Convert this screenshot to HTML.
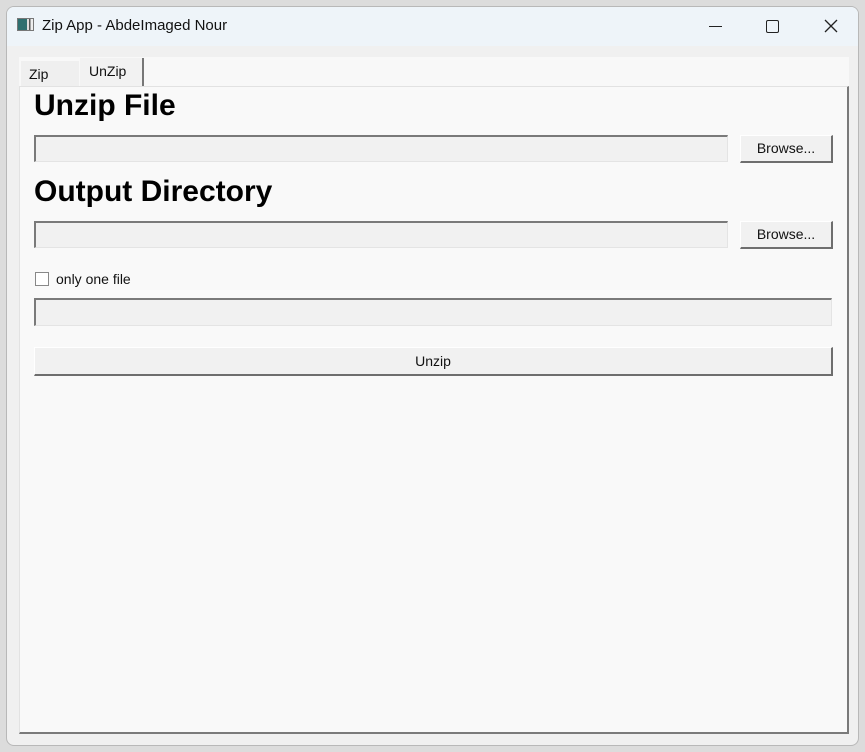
<!DOCTYPE html>
<html><head><style>
*{margin:0;padding:0;box-sizing:border-box}
body{width:865px;height:752px;background:#dcdcdc;position:relative;overflow:hidden;font-family:"Liberation Sans",sans-serif}
.a{position:absolute}
.win{left:6px;top:6px;width:853px;height:740px;background:#f0f0f0;border:1px solid #b8b8b8;border-radius:8px;overflow:hidden}
.title{left:0;top:0;width:853px;height:39px;background:#eef4f9}
.sunk{background:#f1f1f1;border-top:2px solid #7a7a7a;border-left:2px solid #7a7a7a;border-bottom:1px solid #e4e4e4;border-right:1px solid #e4e4e4}
.btn{background:#f1f1f1;border-bottom:2px solid #6e6e6e;border-right:2px solid #6e6e6e;border-top:1px solid #fff;border-left:1px solid #fff;font-size:14px;color:#111;text-align:center}
h1{position:absolute;font-size:30px;font-weight:bold;color:#000}
</style></head><body>
<div class="a win">
 <div class="a title"></div>
 <div class="a" style="left:10px;top:11px;width:17px;height:13px;border:1px solid #777;background:linear-gradient(90deg,#2e6f6f 0 60%,#ddd 60% 75%,#555 75% 85%,#eee 85%)"></div>
 <div class="a" style="left:35px;top:10px;font-size:15px;color:#111">Zip App - AbdeImaged Nour</div>
 <div class="a" style="left:702px;top:19px;width:13px;height:1px;background:#222"></div>
 <div class="a" style="left:759px;top:13px;width:13px;height:13px;border:1.5px solid #222;border-radius:2px"></div>
 <svg class="a" style="left:817px;top:12px" width="14" height="14"><path d="M1 1L13 13M13 1L1 13" stroke="#222" stroke-width="1.3"/></svg>
</div>
<div class="a" style="left:19px;top:57px;width:830px;height:30px;background:#f8f8f8"></div>
<div class="a" style="left:21px;top:61px;width:58px;height:26px;background:#efefef"></div>
<div class="a" style="left:29px;top:66px;font-size:14px;color:#111">Zip</div>
<div class="a" style="left:80px;top:58px;width:64px;height:29px;background:#f2f2f2;border-right:2px solid #777"></div>
<div class="a" style="left:89px;top:63px;font-size:14px;color:#111">UnZip</div>
<div class="a" style="left:19px;top:86px;width:830px;height:648px;background:#f9f9f9;border-top:1px solid #e2e2e2;border-left:1px solid #e2e2e2;border-right:2px solid #7a7a7a;border-bottom:2px solid #7a7a7a"></div>
<h1 style="left:34px;top:89px">Unzip File</h1>
<div class="a sunk" style="left:34px;top:135px;width:694px;height:27px"></div>
<div class="a btn" style="left:740px;top:135px;width:93px;height:28px;line-height:25px">Browse...</div>
<h1 style="left:34px;top:175px">Output Directory</h1>
<div class="a sunk" style="left:34px;top:221px;width:694px;height:27px"></div>
<div class="a btn" style="left:740px;top:221px;width:93px;height:28px;line-height:25px">Browse...</div>
<div class="a" style="left:35px;top:272px;width:14px;height:14px;border:1px solid #888;background:#fff"></div>
<div class="a" style="left:56px;top:271px;font-size:14px;color:#111">only one file</div>
<div class="a sunk" style="left:34px;top:298px;width:798px;height:28px"></div>
<div class="a btn" style="left:34px;top:347px;width:799px;height:29px;line-height:26px">Unzip</div>
</body></html>
